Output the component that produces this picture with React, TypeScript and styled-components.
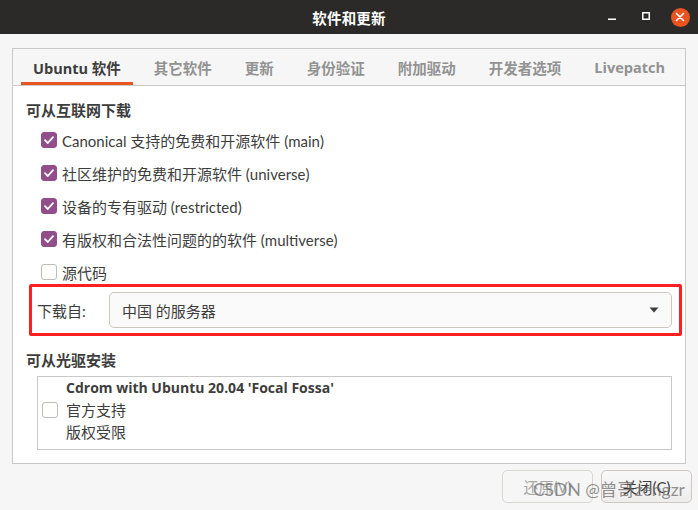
import styled, { createGlobalStyle } from "styled-components";

const GlobalStyle = createGlobalStyle`
  html, body {
    margin: 0;
    padding: 0;
    background: #f6f6f6;
  }
  body {
    font-family: "Lato", "Noto Sans CJK SC", sans-serif;
    color: #3d3d3d;
  }
`;

const tabs = ["Ubuntu 软件", "其它软件", "更新", "身份验证", "附加驱动", "开发者选项", "Livepatch"];

const sources = [
  { label: "Canonical 支持的免费和开源软件 (main)", checked: true },
  { label: "社区维护的免费和开源软件 (universe)", checked: true },
  { label: "设备的专有驱动 (restricted)", checked: true },
  { label: "有版权和合法性问题的的软件 (multiverse)", checked: true },
  { label: "源代码", checked: false },
];

const CheckBox = ({ checked }: { checked: boolean }) => (
  <Box checked={checked}>
    {checked && (
      <svg width="12" height="12" viewBox="0 0 12 12">
        <path d="M2 6.2 L4.8 9 L10 3.2" fill="none" stroke="#fff" strokeWidth="1.8" strokeLinecap="round" strokeLinejoin="round" />
      </svg>
    )}
  </Box>
);

export default function App() {
  return (
    <Window>
      <GlobalStyle />
      <TitleBar>
        <span />
        <Title>软件和更新</Title>
        <Controls>
          <Control>
            <svg width="10" height="10" viewBox="0 0 10 10">
              <rect x="1" y="6.5" width="8" height="1.5" fill="#fff" />
            </svg>
          </Control>
          <Control>
            <svg width="10" height="10" viewBox="0 0 10 10">
              <rect x="1.75" y="0.75" width="6.5" height="6.5" fill="none" stroke="#fff" strokeWidth="1.5" />
            </svg>
          </Control>
          <Control>
            <CloseCircle>
              <svg width="10" height="10" viewBox="0 0 10 10">
                <path d="M1.5 1.5 L8.5 8.5 M8.5 1.5 L1.5 8.5" stroke="#fff" strokeWidth="1.6" strokeLinecap="round" />
              </svg>
            </CloseCircle>
          </Control>
        </Controls>
      </TitleBar>

      <Body>
        <Notebook>
          <TabBar>
            {tabs.map((t, i) => (
              <Tab key={t} active={i === 0}>
                {t}
              </Tab>
            ))}
          </TabBar>
          <Content>
            <Heading>可从互联网下载</Heading>
            <CheckList>
              {sources.map((s) => (
                <CheckRow key={s.label}>
                  <CheckBox checked={s.checked} />
                  <span>{s.label}</span>
                </CheckRow>
              ))}
            </CheckList>

            <MirrorRow>
              <MirrorLabel>下载自:</MirrorLabel>
              <Combo>
                <span>中国 的服务器</span>
                <svg width="10" height="6" viewBox="0 0 10 6">
                  <path d="M0.5 0.5 L9.5 0.5 L5 5.5 Z" fill="#3d3d3d" />
                </svg>
              </Combo>
            </MirrorRow>

            <Heading2>可从光驱安装</Heading2>
            <CdList>
              <CdRow>
                <CheckBox checked={false} />
                <CdText>
                  <strong>Cdrom with Ubuntu 20.04 'Focal Fossa'</strong>
                  <span>官方支持</span>
                  <span>版权受限</span>
                </CdText>
              </CdRow>
            </CdList>
          </Content>
        </Notebook>
        <ButtonRow>
          <Button disabled>还原(V)</Button>
          <Button>关闭(C)</Button>
          <Watermark>CSDN @曾哥zengzr</Watermark>
        </ButtonRow>
      </Body>
    </Window>
  );
}

const Window = styled.div`
  width: 698px;
  height: 510px;
  display: flex;
  flex-direction: column;
  overflow: hidden;
  background: #f6f6f6;
`;

const TitleBar = styled.div`
  height: 34px;
  flex: none;
  background: #2c2a29;
  display: grid;
  grid-template-columns: 1fr auto 1fr;
  align-items: center;
`;

const Title = styled.div`
  color: #ffffff;
  font-weight: 700;
  font-size: 14.5px;
  letter-spacing: 0.2px;
`;

const Controls = styled.div`
  justify-self: end;
  display: flex;
  align-items: center;
  padding-right: 1px;
`;

const Control = styled.div`
  width: 34px;
  height: 34px;
  display: flex;
  align-items: center;
  justify-content: center;
`;

const CloseCircle = styled.div`
  width: 19px;
  height: 19px;
  border-radius: 50%;
  background: #e95420;
  display: flex;
  align-items: center;
  justify-content: center;
`;

const Body = styled.div`
  flex: 1;
  display: flex;
  flex-direction: column;
  padding: 14px 6px 0 12px;
`;

const Notebook = styled.div`
  height: 416px;
  margin-right: 6px;
  border: 1px solid #c9c9c9;
  background: #ffffff;
  display: flex;
  flex-direction: column;
  box-sizing: border-box;
`;

const TabBar = styled.div`
  height: 37px;
  flex: none;
  box-sizing: border-box;
  background: #f6f6f6;
  border-bottom: 1px solid #c9c9c9;
  display: flex;
  align-items: stretch;
  gap: 9px;
  padding-left: 8px;
`;

const Tab = styled.div<{ active?: boolean }>`
  display: flex;
  align-items: center;
  padding: 3px 12px 0;
  font-family: "Open Sans", "Noto Sans CJK SC", sans-serif;
  font-size: 14.5px;
  font-weight: 700;
  color: ${({ active }) => (active ? "#3d3d3d" : "#929292")};
  border-bottom: 3px solid ${({ active }) => (active ? "#e95420" : "transparent")};
`;

const Content = styled.div`
  flex: 1;
  display: flex;
  flex-direction: column;
  padding: 13px 3px 0 13px;
`;

const Heading = styled.div`
  font-weight: 700;
  font-size: 15px;
  line-height: 22px;
`;

const Heading2 = styled(Heading)`
  margin-top: 13px;
`;

const CheckList = styled.div`
  display: flex;
  flex-direction: column;
  gap: 11px;
  margin-top: 8px;
  padding-left: 15px;
`;

const CheckRow = styled.div`
  height: 22px;
  display: flex;
  align-items: center;
  gap: 5px;
  font-size: 15px;
`;

const Box = styled.div<{ checked: boolean }>`
  width: 16px;
  height: 16px;
  flex: none;
  box-sizing: border-box;
  border-radius: 3px;
  display: flex;
  align-items: center;
  justify-content: center;
  background: ${({ checked }) => (checked ? "#924d8b" : "#ffffff")};
  border: 1px solid ${({ checked }) => (checked ? "#924d8b" : "#bfbbb7")};
`;

const MirrorRow = styled.div`
  height: 52px;
  box-sizing: border-box;
  margin: 1px 0 0 3px;
  border: 3px solid #ff1f1f;
  border-radius: 2px;
  display: flex;
  align-items: center;
  padding: 0 7px 0 5px;
`;

const MirrorLabel = styled.div`
  width: 72px;
  flex: none;
  font-size: 15px;
`;

const Combo = styled.div`
  flex: 1;
  height: 36px;
  box-sizing: border-box;
  border: 1px solid #cdc7c2;
  border-radius: 5px;
  background: #fafafa;
  display: flex;
  align-items: center;
  justify-content: space-between;
  padding: 0 12px 0 12px;
  font-size: 15px;
`;

const CdList = styled.div`
  height: 74px;
  box-sizing: border-box;
  margin: 5px 10px 0 11px;
  border: 1px solid #c9c9c9;
  padding-left: 4px;
`;

const CdRow = styled.div`
  display: flex;
  align-items: center;
  gap: 8px;
`;

const CdText = styled.div`
  display: flex;
  flex-direction: column;
  font-size: 15px;
  line-height: 22px;

  strong {
    font-family: "Open Sans", "Noto Sans CJK SC", sans-serif;
    font-weight: 700;
    font-size: 14px;
  }
`;

const ButtonRow = styled.div`
  position: relative;
  display: flex;
  justify-content: flex-end;
  gap: 8px;
  margin-top: 6px;
`;

const Button = styled.button`
  width: 91px;
  height: 33px;
  box-sizing: border-box;
  border: 1px solid #cdc7c2;
  border-radius: 5px;
  background: linear-gradient(#f8f8f8, #efedec);
  font-family: "Lato", "Noto Sans CJK SC", sans-serif;
  font-size: 15px;
  color: #3d3d3d;
  padding: 0;

  &:disabled {
    color: #a8a8a8;
    background: #f6f6f6;
    border-color: #dad6d2;
  }
`;

const Watermark = styled.div`
  position: absolute;
  right: 7px;
  top: 6px;
  font-size: 17.5px;
  color: rgba(110, 110, 110, 0.75);
  pointer-events: none;
  white-space: nowrap;
`;
